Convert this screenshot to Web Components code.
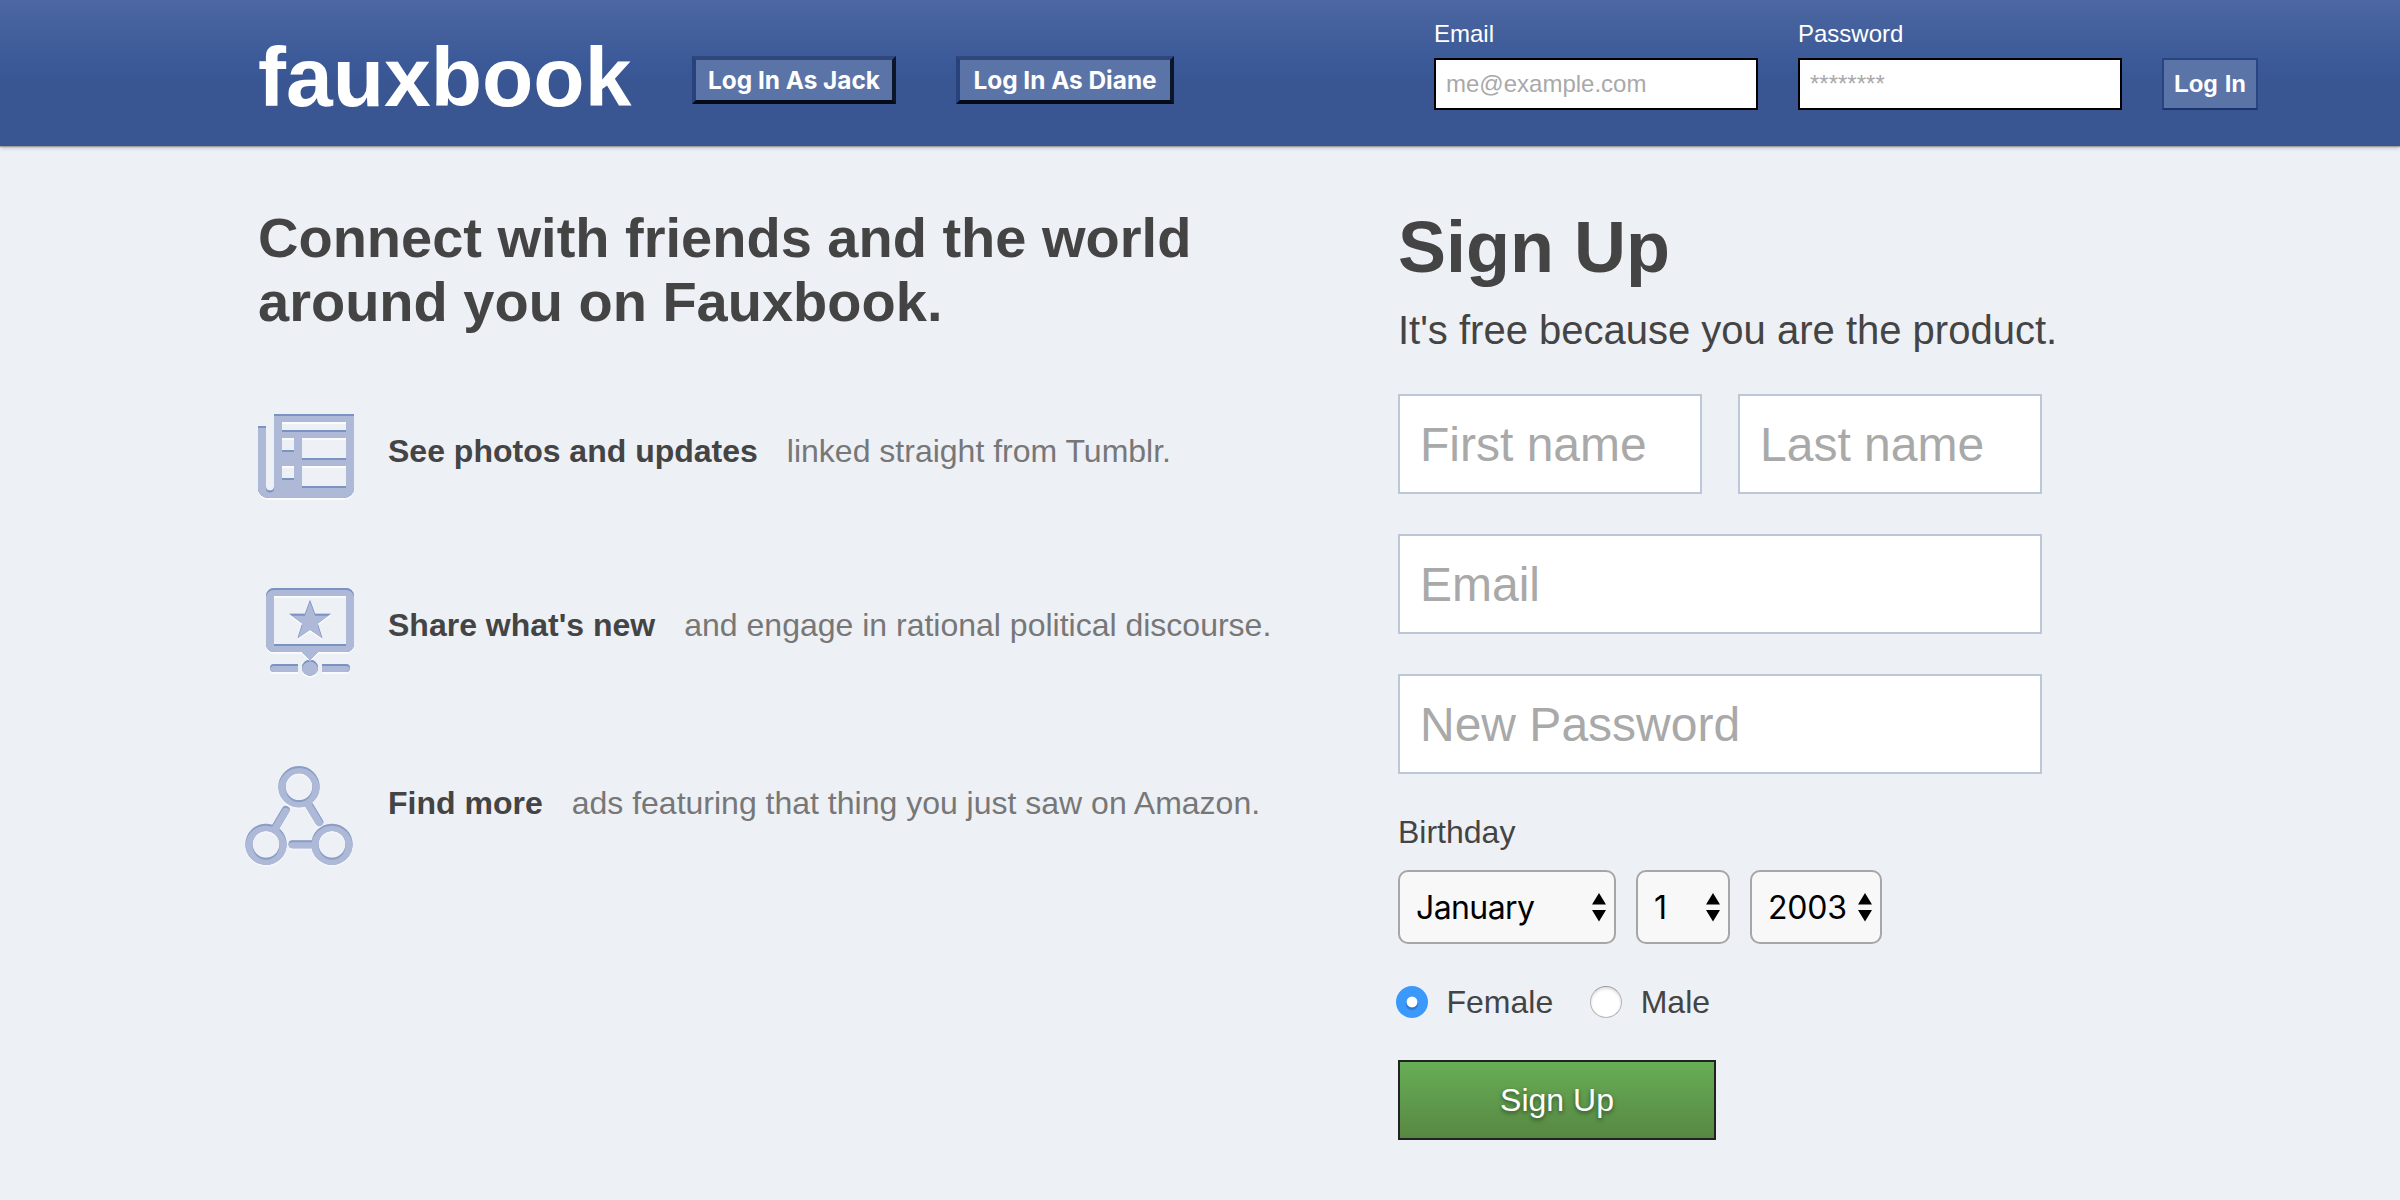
<!DOCTYPE html>
<html lang="en">
<head>
<meta charset="utf-8">
<title>Fauxbook</title>
<style>
body { margin: 0; background: #edf0f5; color: #444; font-family: "Liberation Sans", Arial, sans-serif; }
</style>
</head>
<body>
<faux-page></faux-page>
<script>
const define = (name, html, setup) => {
  const template = document.createElement('template');
  template.innerHTML = html;
  customElements.define(name, class extends HTMLElement {
    constructor() {
      super();
      this.attachShadow({ mode: 'open' }).append(template.content.cloneNode(true));
    }
    connectedCallback() { if (setup) setup(this, this.shadowRoot); }
  });
};

define('persona-button', `
<style>
:host { display: block; }
button { box-sizing: border-box; display: block; width: var(--w); height: 48px; margin: 0; padding: 0; white-space: nowrap;
  border: 4px solid; border-color: #2f4779 #0c1629 #050a18 #29427c; background: #5b74a8; color: #fff;
  font: 700 24.4px/40px Inter, sans-serif; }
</style><button><slot></slot></button>`);

define('login-button', `
<style>
:host { display: block; }
button { box-sizing: border-box; display: block; width: 96px; height: 52px; margin: 0; padding: 0; white-space: nowrap;
  border: 2px solid; border-color: #29447e #29447e #1a356e; background: #5b74a8; color: #fff;
  font: 700 24px/48px "Liberation Sans", Arial, sans-serif; }
</style><button><slot></slot></button>`);

define('login-field', `
<style>
:host { display: block; width: 324px; }
label { display: block; font-size: 24px; line-height: 28px; color: #fff; margin-bottom: 10px; }
input { box-sizing: border-box; display: block; width: 324px; height: 52px; margin: 0; padding: 0 10px; border: 2px solid #000;
  border-radius: 0; background: #fff; font: 24px "Liberation Sans", Arial, sans-serif; }
input::placeholder { color: #a9a9a9; opacity: 1; }
</style><label for="i"><slot></slot></label><input id="i">`,
(host, root) => { root.querySelector('input').placeholder = host.getAttribute('hint'); });

define('top-bar', `
<style>
:host { display: block; height: 146px; position: relative; color: #fff;
  background: linear-gradient(#4c67a1 0, #3b5998 64px, #395693 82px, #395693 100%);
  box-shadow: 0 1px 1px rgba(90,85,80,.4), 0 2px 4px rgba(0,0,0,.2); }
.bar { box-sizing: border-box; height: 146px; padding: 0 142px 0 258px; display: flex; align-items: flex-start; }
h1 { margin: 30px 0 0; font-size: 84px; line-height: 94px; font-weight: 700; width: 434px; }
.people { display: flex; gap: 60px; margin-top: 56px; flex: 1; }
.login { display: flex; gap: 40px; padding-top: 20px; }
login-button { margin-top: 38px; }
</style>
<div class="bar">
  <h1>fauxbook</h1>
  <div class="people">
    <persona-button style="--w:204px">Log In As Jack</persona-button>
    <persona-button style="--w:218px">Log In As Diane</persona-button>
  </div>
  <div class="login">
    <login-field hint="me@example.com">Email</login-field>
    <login-field hint="********">Password</login-field>
    <login-button>Log In</login-button>
  </div>
</div>`);

/* Each icon is one silhouette, embossed in three layers: white lip below, dark top edge, light face. */
const icons = {
  news: { top: 381, lip: .8, edge: 1, art: `<path fill="currentColor" fill-rule="evenodd" d="M258 426h8v60.500a4 4 0 0 0 8 0V414h80v74a10 10 0 0 1-10 10H268a10 10 0 0 1-10-10zM282 422v8h64v-8zM282 438v12h12v-12zM302 438v20h44v-20zM282 466v12h12v-12zM302 466v20h44v-20z"/>` },
  share: { top: 555, lip: .7, edge: 1, art: `<g fill="currentColor"><path fill-rule="evenodd" d="M274 588h72a8 8 0 0 1 8 8v48a8 8 0 0 1-8 8h-28l-8 8-8-8h-28a8 8 0 0 1-8-8v-48a8 8 0 0 1 8-8zM274 596v48h72v-48z"/><path d="M310 600l5.100 13.700h15.700l-13 9.800 4.600 14.700-12.400-8.500-12.400 8.500 4.600-14.700-13-9.800h15.700z"/><circle cx="310" cy="667.700" r="8"/><path d="M298 664v8h-24a4 4 0 0 1 0-8zM322 664h24a4 4 0 0 1 0 8h-24z"/></g>` },
  graph: { top: 733, lip: .35, edge: .7, art: `<g fill="none" stroke="currentColor" stroke-width="7.200" stroke-linecap="round"><circle cx="299" cy="786.700" r="17"/><circle cx="266" cy="844.300" r="17"/><circle cx="332" cy="844.300" r="17"/><path stroke-width="8" d="M285.700 810L275 828M309 805l10.300 17M292.500 844.300H314"/></g>` }
};
define('feature-icon', `
<style>:host { display: block; width: 120px; height: 140px; } svg { display: block; }</style>`,
(host, root) => {
  const i = icons[host.getAttribute('name')];
  root.innerHTML += `<svg width="120" height="140" viewBox="240 ${i.top} 120 140" aria-hidden="true">
<defs><mask id="m" maskUnits="userSpaceOnUse" x="240" y="${i.top}" width="120" height="140"><g color="#fff">${i.art}</g></mask></defs>
<g color="#fff" opacity="${i.lip}" transform="translate(0 2)">${i.art}</g>
<g color="#adb9d6">${i.art}</g>
<g opacity="${i.edge}"><g color="#7b93c2">${i.art}</g><g mask="url(#m)"><g color="#adb9d6" transform="translate(0 2)">${i.art}</g></g></g></svg>`;
});

define('feature-row', `
<style>
:host { display: flex; align-items: center; gap: 28px; margin-left: -18px; height: 140px; white-space: nowrap; font-size: 32px; line-height: 38px; color: #777; }
p { margin: 0; display: flex; gap: 29px; }
b { color: #444; }
</style>
<p><b><slot name="lead"></slot></b><span><slot></slot></span></p>`,
(host, root) => {
  const icon = document.createElement('feature-icon');
  icon.setAttribute('name', host.getAttribute('icon'));
  root.querySelector('p').before(icon);
});

define('pitch-panel', `
<style>
:host { display: block; width: 1140px; }
h2 { margin: 0 0 47px; font-size: 56px; line-height: 64px; font-weight: 700; }
.list { display: flex; flex-direction: column; }
.list > * + * { margin-top: 34px; }
.list > :last-child { margin-top: 38px; }
</style>
<h2>Connect with friends and the world<br>around you on Fauxbook.</h2>
<div class="list">
  <feature-row icon="news"><span slot="lead">See photos and updates</span>linked straight from Tumblr.</feature-row>
  <feature-row icon="share"><span slot="lead">Share what's new</span>and engage in rational political discourse.</feature-row>
  <feature-row icon="graph"><span slot="lead">Find more</span>ads featuring that thing you just saw on Amazon.</feature-row>
</div>`);

define('big-field', `
<style>
:host { display: block; flex: 1; min-width: 0; }
input { box-sizing: border-box; display: block; width: 100%; height: 100px; margin: 0; padding: 0 20px; border: 2px solid #bdc7d8;
  border-radius: 0; background: #fff; font: 48px "Liberation Sans", Arial, sans-serif; }
input::placeholder { color: #a9a9a9; opacity: 1; }
</style><input>`,
(host, root) => { root.querySelector('input').placeholder = host.getAttribute('hint'); });

define('pick-list', `
<style>
:host { display: grid; width: var(--w); height: 74px; align-items: center; }
select, svg { grid-area: 1 / 1; }
select { box-sizing: border-box; width: 100%; height: 74px; margin: 0; padding: 0 0 0 16px; appearance: none; border: 2px solid #a6a6a6;
  border-radius: 10px; background: #f8f8f8; color: #000; font: 32px Inter, sans-serif; letter-spacing: var(--ls, -.6px); }
svg { justify-self: end; margin-right: 10px; pointer-events: none; }
</style>
<select><option></option></select>
<svg width="14" height="30" viewBox="0 0 14 30"><path d="M0 12.500L7 1l7 11.500zM0 18h14L7 29.500z"/></svg>`,
(host, root) => { root.querySelector('option').textContent = host.getAttribute('value'); });

define('radio-choice', `
<style>
:host { display: block; }
label { display: flex; align-items: center; gap: 18.500px; font-size: 32px; line-height: 36px; }
input { appearance: none; box-sizing: border-box; width: 32px; height: 32px; margin: 0; border-radius: 50%; background: #fff;
  border: 1px solid #b5b5b5; border-top-color: #999; box-shadow: inset 0 2px 3px rgba(0,0,0,.13); }
input:checked { border: 0; box-shadow: none; background: radial-gradient(circle at 50% 50%, #fff 5px, transparent 5.800px), radial-gradient(circle at 50% 56%, #2c78d0 5px, #3b99fc 7px); }
</style><label><input type="radio"><span><slot></slot></span></label>`,
(host, root) => { root.querySelector('input').checked = host.hasAttribute('checked'); });

define('submit-button', `
<style>
:host { display: block; }
button { box-sizing: border-box; display: block; width: 318px; height: 80px; margin: 0; padding: 0; border: 2px solid #222;
  background: linear-gradient(#67ae55, #578843); color: #fff; font: 32px/76px "Liberation Sans", Arial, sans-serif; text-shadow: 0 2px 4px rgba(0,0,0,.5); }
</style><button><slot></slot></button>`);

define('signup-form', `
<style>
:host { display: block; width: 644px; }
h2 { margin: 0; font-size: 72px; line-height: 80px; font-weight: 700; }
.sub { margin: 19px 0 40px; font-size: 40px; line-height: 48px; white-space: nowrap; }
.fields { display: flex; flex-direction: column; gap: 40px; }
.names { display: flex; gap: 36px; }
.birthday { margin: 39px 0 19px; font-size: 32px; line-height: 38px; }
.dates { display: flex; gap: 20px; }
.sex { display: flex; gap: 37px; margin: 40px 0 40px -2px; }
</style>
<h2>Sign Up</h2>
<div class="sub">It's free because you are the product.</div>
<div class="fields">
  <div class="names"><big-field hint="First name"></big-field><big-field hint="Last name"></big-field></div>
  <big-field hint="Email"></big-field>
  <big-field hint="New Password"></big-field>
</div>
<div class="birthday">Birthday</div>
<div class="dates">
  <pick-list value="January" style="--w:218px"></pick-list>
  <pick-list value="1" style="--w:94px"></pick-list>
  <pick-list value="2003" style="--w:132px;--ls:-.2px"></pick-list>
</div>
<div class="sex"><radio-choice checked>Female</radio-choice><radio-choice>Male</radio-choice></div>
<submit-button>Sign Up</submit-button>`);

define('faux-page', `
<style>
:host { display: block; }
main { display: flex; padding: 60px 0 0 258px; }
signup-form { padding-top: 1px; }
</style>
<top-bar></top-bar>
<main><pitch-panel></pitch-panel><signup-form></signup-form></main>`);
</script>
</body>
</html>
